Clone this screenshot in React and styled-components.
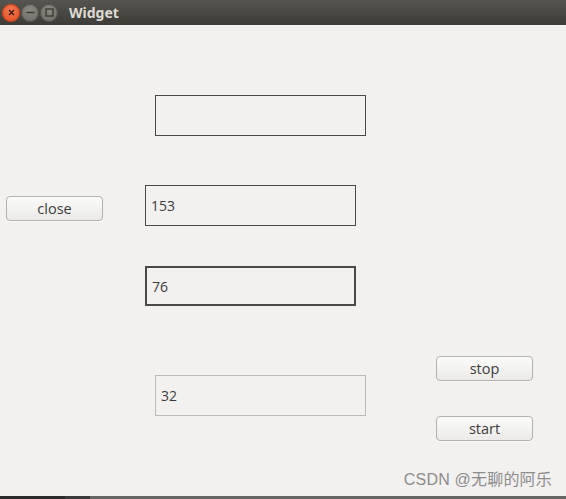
import React from "react"
import styled, { createGlobalStyle } from "styled-components"

const GlobalStyle = createGlobalStyle`
  html, body {
    margin: 0;
    padding: 0;
    background: #f2f1f0;
  }
`

const Window = styled.div`
  width: 566px;
  height: 499px;
  display: flex;
  flex-direction: column;
  overflow: hidden;
  font-family: "Open Sans", "Noto Sans", sans-serif;
`

const TitleBar = styled.div`
  height: 25px;
  flex-shrink: 0;
  display: flex;
  align-items: center;
  padding-left: 2px;
  background: linear-gradient(#57554f, #3c3b37);
  box-sizing: border-box;
`

const WinButton = styled.div`
  width: 18px;
  height: 18px;
  border-radius: 50%;
  margin-right: 1px;
  display: flex;
  align-items: center;
  justify-content: center;
  background: ${(p) =>
    p.$close
      ? "radial-gradient(circle at 50% 35%, #f57a4f, #e0461c)"
      : "radial-gradient(circle at 50% 35%, #8c8a84, #69675f)"};
  box-shadow: inset 0 0 0 1px ${(p) => (p.$close ? "#b8401c" : "#4e4d48")};
`

const Title = styled.span`
  margin-left: 10px;
  color: #dfdbd2;
  font-family: "Noto Sans", "Open Sans", sans-serif;
  font-weight: 700;
  font-size: 14px;
`

const Body = styled.div`
  position: relative;
  flex: 1;
  display: flex;
  flex-direction: column;
  background: #f2f1f0;
`

const Row = styled.div`
  display: flex;
  align-items: flex-start;
  margin-top: ${(p) => p.$top}px;
`

const Field = styled.div`
  box-sizing: border-box;
  width: 211px;
  height: ${(p) => (p.$focus ? 40 : 41)}px;
  margin-left: ${(p) => p.$left || 0}px;
  margin-top: ${(p) => p.$top || 0}px;
  padding-left: 5px;
  display: flex;
  align-items: center;
  border: ${(p) => (p.$focus ? 2 : 1)}px solid
    ${(p) => (p.$disabled ? "#bdbbb7" : "#4a4946")};
  font-size: 14px;
  color: #3c3c3c;
`

const Button = styled.div`
  box-sizing: border-box;
  width: 97px;
  height: 25px;
  margin-left: ${(p) => p.$left || 0}px;
  margin-top: ${(p) => p.$top || 0}px;
  display: flex;
  align-items: center;
  justify-content: center;
  border: 1px solid #b3b1ac;
  border-radius: 4px;
  background: linear-gradient(#fbfbfa, #ebeae8);
  box-shadow: 0 1px 0 rgba(255, 255, 255, 0.6);
  font-size: 14.5px;
  color: #3c3c3c;
  padding-bottom: 1px;
`

const ButtonColumn = styled.div`
  display: flex;
  flex-direction: column;
  gap: 35px;
  margin-left: 70px;
`

const Watermark = styled.div`
  position: absolute;
  right: 14px;
  bottom: 6px;
  font-family: "Liberation Sans", "Noto Sans CJK SC", sans-serif;
  font-size: 16px;
  color: #8c8c8c;
  letter-spacing: 0.2px;
`

const BottomStrip = styled.div`
  height: 3px;
  flex-shrink: 0;
  display: flex;
`

const StripPart = styled.div`
  width: ${(p) => (p.$w ? `${p.$w}px` : "auto")};
  flex: ${(p) => (p.$w ? "none" : 1)};
  background: ${(p) => p.$color};
`

export default function App() {
  return (
    <>
      <GlobalStyle />
      <Window>
        <TitleBar>
          <WinButton $close>
            <svg width="7" height="7" viewBox="0 0 7 7">
              <path d="M1 1L6 6M6 1L1 6" stroke="#3b1a0e" strokeWidth="1.4" />
            </svg>
          </WinButton>
          <WinButton>
            <svg width="9" height="3" viewBox="0 0 9 3">
              <path d="M0.5 1.5H8.5" stroke="#37362f" strokeWidth="1.4" />
            </svg>
          </WinButton>
          <WinButton>
            <svg width="9" height="9" viewBox="0 0 9 9">
              <rect x="1" y="1" width="7" height="7" fill="none" stroke="#37362f" strokeWidth="1.3" />
            </svg>
          </WinButton>
          <Title>Widget</Title>
        </TitleBar>
        <Body>
          <Row $top={70}>
            <Field $left={155} />
          </Row>
          <Row $top={49}>
            <Button $left={6} $top={11}>close</Button>
            <Field $left={42}>153</Field>
          </Row>
          <Row $top={40}>
            <Field $left={145} $focus>76</Field>
          </Row>
          <Row $top={50}>
            <Field $left={155} $top={19} $disabled>32</Field>
            <ButtonColumn>
              <Button>stop</Button>
              <Button>start</Button>
            </ButtonColumn>
          </Row>
          <Watermark>CSDN @无聊的阿乐</Watermark>
        </Body>
        <BottomStrip>
          <StripPart $w={65} $color="#2b2b2b" />
          <StripPart $w={25} $color="#3a3a3a" />
          <StripPart $color="#666664" />
        </BottomStrip>
      </Window>
    </>
  )
}
